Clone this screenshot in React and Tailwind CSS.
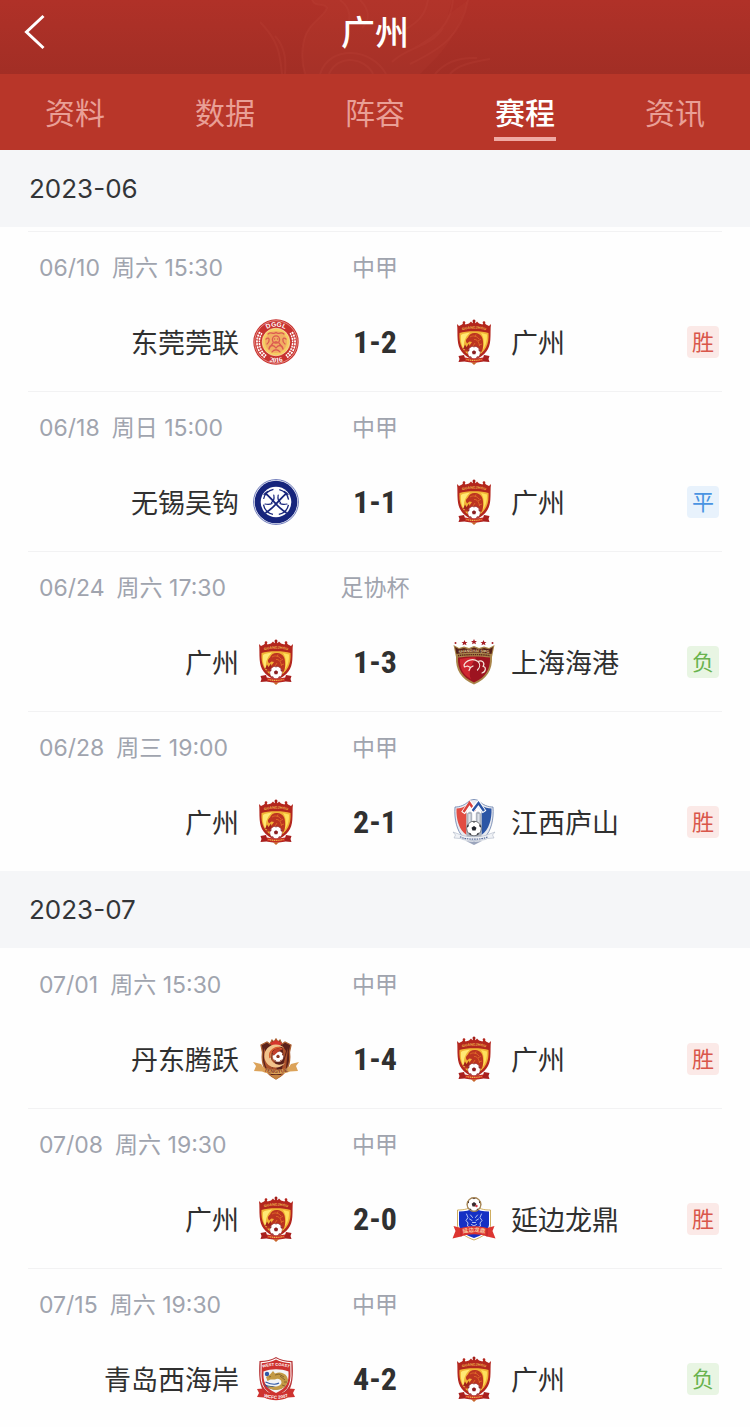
import React from 'react';

const SERIF = 'Liberation Serif, serif';
const SANS = 'Liberation Sans, sans-serif';

function Football({ cx, cy, r, dark = '#3a2a30' }) {
  return (
    <g transform={`translate(${cx} ${cy}) scale(${r / 8})`}>
      <circle r="8" fill="#fff" stroke={dark} strokeWidth="0.6" />
      <path d="M0-2.800 2.700-.8 1.700 2.300H-1.700L-2.700-.8Z" fill={dark} />
      <path d="M-2-7.600 0-6.200 2-7.600ZM5.800-4.600 5.900-2.200 7.800-1 7.300-3.400ZM-5.800-4.600-5.900-2.200-7.800-1-7.300-3.400ZM3.400 5.400 5.800 4.300 4.400 6.600 2.700 7.400ZM-3.400 5.400-5.800 4.300-4.400 6.600-2.700 7.400Z" fill={dark} />
    </g>
  );
}

function GuangzhouCrest() {
  return (
    <svg viewBox="0 0 46 46" className="size-full" aria-hidden="true">
      <path d="M6 5 8 7 11 5.500 13 3 14.500 5.500 18 4.500 20 2.500 21.500 4.200 23 .5 24.500 4.200 26 2.500 28 4.500 31.500 5.500 33 3 35 5.500 38 7 40 5C39.300 10 39.800 15 39.300 21 38.600 30 35 36 23 41.500 11 36 7.400 30 6.700 21 6.200 15 6.700 10 6 5Z" fill="#b3261e" />
      <circle cx="23" cy="2" r="1.500" fill="#a31f1a" />
      <circle cx="13" cy="3.500" r="1.300" fill="#b3261e" />
      <circle cx="33" cy="3.500" r="1.300" fill="#b3261e" />
      <path d="M8.500 14C15 11.500 31 11.500 37.500 14 38.200 25 35 33.500 23 39 11 33.500 7.800 25 8.500 14Z" fill="#f2b436" />
      <path d="M10 16C12 14.500 15 14 19 13.500 13 19 11.500 26 14 32 10.500 27.500 9.500 22 10 16Z" fill="#ffe974" />
      <path d="M30 14 36 15.500C36.200 22 34.800 27 31.500 31 33.500 25 33.500 19 30 14Z" fill="#ffe05c" />
      <path id="gz-title" d="M10 11.800C17 9 29 9 36 11.800" fill="none" />
      <text fontSize="3.600" fontWeight="700" fontFamily={SANS} fill="#f0bd4e" textAnchor="middle">
        <textPath href="#gz-title" startOffset="50%">GUANGZHOU</textPath>
      </text>
      <path d="M15 22.500C14.500 20.500 16 19.500 17 18.500 18 15.500 21 13.500 24.500 14 29.500 14.600 31.800 18 32 22.500 32.200 26 32.600 29 30.500 33L25 31 19 32 12.500 33C13.500 30 15.500 28.500 18.500 26.500L21 23 18.500 22.500 16 24.500Z" fill="#bc3420" />
      <path d="M19 18C22 16 26 17 28 20M23 20.500C26 20 28 23 28.500 27M25 15.500 24 18M30 20 27 22M31 25 28 26M24 24 21.500 28" fill="none" stroke="#e2702a" strokeWidth="0.800" />
      <path d="M12 30 14 25.500 15.500 28 18 24.500 19 31" fill="#a3241a" />
      <Football cx={23} cy={33.500} r={6.300} dark="#8a1f22" />
      <path d="M7.500 37 13 36 14 39C20 40.500 26 40.500 32 39L33 36 38.500 37 37.500 40 38.500 43 32.500 42.500C26 44 20 44 13.500 42.500L7.500 43 8.500 40Z" fill="#a81f1d" />
      <path d="M14 38.500C20 40 26 40 32 38.500V42C26 43.500 20 43.500 14 42Z" fill="#c62c22" />
      <path d="M15.500 40.500C20 41.700 26 41.700 30.500 40.500" stroke="#f0bd4e" strokeWidth="1.100" strokeDasharray="1.200 .6" fill="none" />
      <path d="M20 43.300 23 46 26 43.300Z" fill="#c8662c" />
    </svg>
  );
}

function DongguanCrest() {
  return (
    <svg viewBox="0 0 46 46" className="size-full" aria-hidden="true">
      <circle cx="23" cy="23" r="22.700" fill="#c8322f" />
      <circle cx="23" cy="23" r="21.300" fill="none" stroke="#f0a9a0" strokeWidth="0.700" />
      <circle cx="23" cy="23" r="13.800" fill="#f6cd62" stroke="#fbe3b0" strokeWidth="0.700" />
      <path d="M7.800 13.500A18 18 0 0 0 12.500 37.600M38.200 13.500A18 18 0 0 1 33.500 37.600" stroke="#fff" strokeWidth="4" strokeDasharray="2 .8" fill="none" />
      <path d="M7.800 13.500A18 18 0 0 0 12.500 37.600M38.200 13.500A18 18 0 0 1 33.500 37.600" stroke="#c8322f" strokeWidth="0.800" fill="none" />
      <path id="dg-top" d="M7.500 23A15.500 15.500 0 0 1 38.500 23" fill="none" />
      <path id="dg-bottom" d="M2.500 23A20.500 20.500 0 0 0 43.500 23" fill="none" />
      <text fontSize="6.500" fontWeight="700" fontFamily={SANS} fill="#fff" textAnchor="middle">
        <textPath href="#dg-top" startOffset="50%">DGGL</textPath>
      </text>
      <text fontSize="7" fontWeight="700" fontFamily={SERIF} fill="#fff" textAnchor="middle">
        <textPath href="#dg-bottom" startOffset="50%">2016</textPath>
      </text>
      <circle cx="23" cy="23" r="11" fill="#ee9a62" opacity="0.600" />
      <g fill="none" stroke="#dc5a50" strokeWidth="1.300" strokeLinecap="round">
        <circle cx="23" cy="20.500" r="3.600" />
        <path d="M15 15C18 12 20 16 23 13.500 26 16 28 12 31 15M13 20C17 17 17 23 14 25M33 20C29 17 29 23 32 25M16 30C17 25 21 26 23 29 25 26 29 25 30 30M19 33C21 30 25 30 27 33M20 24 17 28M26 24 29 28" />
        <path d="M21.500 20h.2M24.500 20h.2M22 23h2" />
      </g>
    </svg>
  );
}

function WuxiCrest() {
  return (
    <svg viewBox="0 0 46 46" className="size-full" aria-hidden="true">
      <circle cx="23" cy="23" r="22.400" fill="#fff" stroke="#5664ae" strokeWidth="0.900" />
      <circle cx="23" cy="23" r="21.300" fill="#17257c" />
      <circle cx="23" cy="23" r="15.300" fill="#fff" />
      <circle cx="23" cy="23" r="12.800" fill="none" stroke="#17257c" strokeWidth="1.300" strokeDasharray="14.100 6" strokeDashoffset="-3" />
      <g fill="none" stroke="#17257c" strokeLinecap="round">
        <path d="M12.500 14.500C16 17 20 22 23 25 26 28.500 30 31.500 33 33.500" strokeWidth="1.800" />
        <path d="M33.500 14.500C30 17 26 22 23 25 20 28.500 16 31.500 13 33.500" strokeWidth="1.800" />
        <path d="M20.800 16C21.500 19.500 20.800 22 18.500 23.500M25.200 16C24.500 19.500 25.200 22 27.500 23.500M12 25C15 25.500 17 25.500 19 24.500M34 25C31 25.500 29 25.500 27 24.500" strokeWidth="1.200" />
        <path d="M11 15.500 14.500 12.500M35 15.500 31.500 12.500" strokeWidth="1.200" />
      </g>
    </svg>
  );
}

function ShanghaiCrest() {
  return (
    <svg viewBox="0 0 46 46" className="size-full" aria-hidden="true">
      <path d="M2.500 6 8 9 13 7.500 18 9 23 7 28 9 33 7.500 38 9 43.500 6 41 18C41.500 31 36 40 23 45.500 10 40 4.500 31 5 18Z" fill="#a9854a" />
      <path d="M4 8 8 10.200 13 9 18 10.500 23 8.500 28 10.500 33 9 38 10.200 42 8 40.500 15C30 13 16 13 5.500 15Z" fill="#542018" />
      <path id="sh-title" d="M5.500 14.800C16 12.300 30 12.300 40.500 14.800" fill="none" />
      <text fontSize="3.800" fontWeight="700" fontFamily={SANS} fill="#ead49d" textAnchor="middle">
        <textPath href="#sh-title" startOffset="50%">SHANGHAI SIPG</textPath>
      </text>
      <path d="M7 16.700C16 15.200 30 15.200 39 16.700" stroke="#5c261b" strokeWidth="1.400" strokeDasharray="1.400 .7" fill="none" />
      <path d="M7 18.500C16 17 30 17 39 18.500 39.500 30 35 38 23 43.500 11 38 6.500 30 7 18.500Z" fill="#9d1420" />
      <path d="M9 20C15 18.500 20 18.500 25 18.500 20 25 17 35 20 40 12 36 8.500 29 9 20Z" fill="#cf2630" />
      <path d="M13 26C15 21 22 19 27 22.500 29.500 25 29 28.500 26.500 31M13 26 13.500 28 16.500 27 19.500 28.500 18 31.500M19.500 28.500 22 27M27 22.500C31 20.500 34.500 24 32 27.500 35.500 27.500 35 33 31 34" fill="none" stroke="#f6e6dc" strokeWidth="1.200" strokeLinecap="round" strokeLinejoin="round" />
      <g fill="#a51d25">
        <path id="sh-star" d="M23 0 23.900 1.900 26 2 24.400 3.300 25 5.300 23 4.200 21 5.300 21.600 3.300 20 2 22.100 1.900Z" />
        <use href="#sh-star" x="-9.500" y="1" />
        <use href="#sh-star" x="9.500" y="1" />
        <circle cx="4.500" cy="4" r="1" />
        <circle cx="41.500" cy="4" r="1" />
      </g>
    </svg>
  );
}

function JiangxiCrest() {
  return (
    <svg viewBox="0 0 46 46" className="size-full" aria-hidden="true">
      <path d="M4 8C9 8 14 6 18 2 21 0 25 0 28 2 32 6 37 8 42 8 43 20 40 32 34 38L23 42 12 38C6 32 3 20 4 8Z" fill="#e8eaf0" stroke="#667dab" strokeWidth="0.800" />
      <path d="M5.500 9.500C9 9.500 12.500 8.500 15.500 6.500V36C8 31 5 20 5.500 9.500Z" fill="#e24c42" />
      <path d="M30.500 6.500C33.500 8.500 37 9.500 40.500 9.500 41 20 38 31 30.500 36Z" fill="#2b55a5" />
      <path d="M15.500 13H30.500V38H15.500Z" fill="#aeb4bf" />
      <path d="M18.500 15V35M27.500 15V35" stroke="#dfe3ea" strokeWidth="2" />
      <path d="M23 12V35" stroke="#fff" strokeWidth="3.600" />
      <path d="M12 14 19 4.500 25 13" fill="none" stroke="#fff" strokeWidth="4.500" />
      <path d="M12.500 13 18.500 4 24 12" fill="none" stroke="#d9423d" strokeWidth="2.400" />
      <path d="M21 12 27.500 4 33.500 13" fill="none" stroke="#fff" strokeWidth="4.500" />
      <path d="M21.500 12 27.500 4 33 12" fill="none" stroke="#2b55a5" strokeWidth="2.400" />
      <path d="M16 14 19 10 22 14M24 14 27 10 30 14" fill="none" stroke="#fff" strokeWidth="1.500" />
      <Football cx={23} cy={29.500} r={7.300} dark="#20242c" />
      <path d="M2 33 9 35.500C15 38.500 31 38.500 37 35.500L44 33 41.500 36 43 39 36.500 39.500C32 42.500 14 42.500 9.500 39.500L3 39 4.500 36Z" fill="#f0f2f6" stroke="#a1aabd" strokeWidth="0.500" />
      <path d="M9 37.800C15 41 31 41 37 37.800" stroke="#5a6d9a" strokeWidth="1.200" strokeDasharray="1.600 .8" fill="none" />
      <path d="M15 42C20 43 26 43 31 42L23 46Z" fill="#9ba5bc" />
    </svg>
  );
}

function DandongCrest() {
  return (
    <svg viewBox="0 0 46 46" className="size-full" aria-hidden="true">
      <path d="M8 9 14 6 17 8 19 4 21 6 23 3 25 6 27 4 29 8 32 6 38 9 36.500 16C38 29 34 37 23 43 12 37 8 29 9.500 16Z" fill="#5b211a" stroke="#ad6234" strokeWidth="1.300" />
      <path d="M11 12 20 34 14 33C11 27 10.500 19 11 12ZM17 10 25 37 20 36ZM35 12 33 32 28 36ZM29 9 33 15 31 22Z" fill="#ab512b" />
      <path d="M17 7 23 4 29 7 27 10H19Z" fill="#d5362d" />
      <path d="M31 12A11.500 11.500 0 1 0 32 27 9 9 0 1 1 31 12Z" fill="#f2c38b" />
      <path d="M29 13C23 9 15 15 17 22" fill="none" stroke="#d85d2f" strokeWidth="1.600" />
      <Football cx={25} cy={20.500} r={5.500} dark="#8c3a24" />
      <path d="M19 16 23 12.500 30 13 26 15 21 19.500Z" fill="#c3402a" />
      <path d="M0 26 8 28 10 31C18 34.500 28 34.500 36 31L38 28 46 26 43 30 45 35 37 35.500C29 39 17 39 9 35.500L1 35 3 30Z" fill="#dca35a" />
      <path id="dd-title" d="M8 34.500C18 38 28 38 38 34.500" fill="none" />
      <text fontSize="5" fontWeight="700" fontFamily={SANS} fill="#863525" textAnchor="middle">
        <textPath href="#dd-title" startOffset="50%">TENGYUE</textPath>
      </text>
      <path d="M17 39H29L23 43.500Z" fill="#c58442" />
    </svg>
  );
}

function YanbianCrest() {
  return (
    <svg viewBox="0 0 46 46" className="size-full" aria-hidden="true">
      <path d="M6.500 14C13 14 18 13 23 9 28 13 33 14 39.500 14V30C38 37 31 41 23 44 15 41 8 37 6.500 30Z" fill="#fff" stroke="#c9a54f" strokeWidth="0.900" />
      <path d="M8 15.500C14 15.500 19 14.500 23 11.500 27 14.500 32 15.500 38 15.500V29C37 36 30 39.500 23 42 16 39.500 9 36 8 29Z" fill="#1530c4" />
      <g fill="none" stroke="#c9d5f7" strokeWidth="0.900" strokeLinecap="round">
        <path d="M15.500 18 17 21.500 15 24.500 17 27 16.500 30 20 32M30.500 18 29 21.500 31 24.500 29 27 29.500 30 26 32M19.500 19 21.500 21.500M26.500 19 24.500 21.500M18.500 23 21 24.500M27.500 23 25 24.500M20.500 28.500 23 30 25.500 28.500M21.500 26.500H24.500" />
      </g>
      <Football cx={23} cy={8.500} r={6.800} />
      <circle cx="23" cy="8.500" r="6.900" fill="none" stroke="#a98651" strokeWidth="1.200" />
      <circle cx="25.500" cy="10" r="1.200" fill="#d63d49" />
      <path d="M2.500 30 10 32C18 29.500 28 29.500 36 32L43.500 30 41.500 35 44.500 42.500 36 40.500C28 37.500 18 37.500 10 40.500L1.500 42.500 4.500 35Z" fill="#dc3531" />
      <path d="M10 32V40.500M36 32V40.500" stroke="#a92526" strokeWidth="0.800" />
      <path id="yb-title" d="M10 37.800C18 35.300 28 35.300 36 37.800" fill="none" />
      <text fontSize="5.500" fontWeight="700" fontFamily="Noto Sans CJK SC, sans-serif" fill="#f8c7a0" textAnchor="middle">
        <textPath href="#yb-title" startOffset="50%">延边龙鼎</textPath>
      </text>
    </svg>
  );
}

function QingdaoCrest() {
  return (
    <svg viewBox="0 0 46 46" className="size-full" aria-hidden="true">
      <path d="M6.500 5C13 5 19 3.500 23 1 27 3.500 33 5 39.500 5 40.500 18 40 31 34 37 30 40 26 42 23 43.500 20 42 16 40 12 37 6 31 5.500 18 6.500 5Z" fill="#b9383a" />
      <path d="M7.700 6.200C13.500 6 19 4.500 23 2.300 27 4.500 32.500 6 38.300 6.200L38.500 20C38 31 33 36 23 41 13 36 8 31 7.500 20Z" fill="#fff" />
      <path d="M8.700 7.200C14 7 19 5.500 23 3.500 27 5.500 32 7 37.300 7.200L37.500 20C37 31 33 36 23 40 13 36 9 31 8.500 20Z" fill="#ce322f" />
      <path d="M10.500 15.500C18 12.500 28 12.500 35.500 15.500 36 26 34 32 23 37 12 32 10 26 10.500 15.500Z" fill="#f3f4f5" />
      <path id="qd-top" d="M10 11.800C18 9 28 9 36 11.800" fill="none" />
      <text fontSize="4" fontWeight="700" fontFamily={SANS} fill="#fff" textAnchor="middle">
        <textPath href="#qd-top" startOffset="50%">WEST COAST</textPath>
      </text>
      <path d="M11 27C13 34 30 38 35.500 25 34 30 28 33 23 31 18 29 14 31 11 27Z" fill="#254c93" />
      <path d="M13 21 17 18.500 20 15 22 17.500C29 14.500 35 19 35 24.500 34 31 28 34 23 34 19 34 16 32.500 14 30 20 31.500 28 31 28.500 26.500 28.500 23 24.500 22 22 23.500L17.500 23.500 14.500 25Z" fill="#c39a45" />
      <path d="M22 19 26 18 31 21M27 20 32 24M31 26 34 26M29 29 32 30M16 21 18 20.500" fill="none" stroke="#7a5b28" strokeWidth="0.800" />
      <path d="M12.500 26C17 28 22 29.500 26 27" fill="none" stroke="#2d57a6" strokeWidth="1.200" />
      <circle cx="14" cy="18" r="2.200" fill="#2d57a6" />
      <path d="M4 33 10 32.500 12 35C19 38.500 27 38.500 34 35L36 32.500 42 33 40 37 42 41 35 41.500C27 45 19 45 11 41.500L4 41 6 37Z" fill="#ce322f" />
      <path id="qd-bottom" d="M10 40.300C18 43.500 28 43.500 36 40.300" fill="none" />
      <text fontSize="4.500" fontWeight="700" fontFamily={SANS} fill="#fff" textAnchor="middle">
        <textPath href="#qd-bottom" startOffset="50%">WCFC 2007</textPath>
      </text>
    </svg>
  );
}

const CRESTS = {
  广州: GuangzhouCrest,
  东莞莞联: DongguanCrest,
  无锡吴钩: WuxiCrest,
  上海海港: ShanghaiCrest,
  江西庐山: JiangxiCrest,
  丹东腾跃: DandongCrest,
  延边龙鼎: YanbianCrest,
  青岛西海岸: QingdaoCrest,
};

const RESULT_STYLES = {
  胜: 'bg-[#fbe9e7] text-[#d9574b]',
  平: 'bg-[#e8f2fc] text-[#4a94e2]',
  负: 'bg-[#e8f5e3] text-[#68b34e]',
};

const TABS = ['资料', '数据', '阵容', '赛程', '资讯'];

const MONTHS = [
  {
    month: '2023-06',
    matches: [
      { date: '06/10', time: '周六 15:30', league: '中甲', home: '东莞莞联', score: '1-2', away: '广州', result: '胜' },
      { date: '06/18', time: '周日 15:00', league: '中甲', home: '无锡吴钩', score: '1-1', away: '广州', result: '平' },
      { date: '06/24', time: '周六 17:30', league: '足协杯', home: '广州', score: '1-3', away: '上海海港', result: '负' },
      { date: '06/28', time: '周三 19:00', league: '中甲', home: '广州', score: '2-1', away: '江西庐山', result: '胜' },
    ],
  },
  {
    month: '2023-07',
    matches: [
      { date: '07/01', time: '周六 15:30', league: '中甲', home: '丹东腾跃', score: '1-4', away: '广州', result: '胜' },
      { date: '07/08', time: '周六 19:30', league: '中甲', home: '广州', score: '2-0', away: '延边龙鼎', result: '胜' },
      { date: '07/15', time: '周六 19:30', league: '中甲', home: '青岛西海岸', score: '4-2', away: '广州', result: '负' },
    ],
  },
];

function Crest({ team }) {
  const Drawing = CRESTS[team];
  return (
    <span className="size-[46px] shrink-0">
      <Drawing />
    </span>
  );
}

function Header() {
  return (
    <header className="relative flex h-[74px] items-center justify-center overflow-hidden bg-linear-to-b from-[#b03128] to-[#a22e25] pb-2">
      <svg viewBox="0 0 230 74" className="absolute top-0 left-1/2 h-full w-[230px] -translate-x-1/2" fill="none" aria-hidden="true">
        <path d="M52 0C55 8 64 2 67 8 63 18 48 23 44 40 41 53 42 64 45 74H160C176 58 196 42 208 0L188 15 192 0Z" fill="#c34338" opacity="0.160" />
        <g stroke="#c34a3e" strokeWidth="2" opacity="0.200">
          <path d="M0 22C20 42 20 57 22 74M15 36C26 48 26 62 25 74M52 0C55 8 64 2 67 8 63 18 48 23 44 40 41 53 42 64 45 74" />
          <path d="M208 0C201 36 181 49 150 64M193 0C191 25 176 36 155 48M168 0C165 17 156 23 146 29M217 58C199 57 185 62 175 74M230 59C207 63 197 66 190 74M80 0C91 8 92 20 85 28M100 0C110 10 110 20 102 28" />
          <path d="M60 74C70 44 112 48 126 74M69 74C78 53 106 58 113 74M132 62C148 46 170 48 183 28" />
        </g>
      </svg>
      <button type="button" aria-label="返回" className="absolute top-3.5 left-5 flex h-9 w-8 items-center justify-center text-white">
        <svg viewBox="0 0 32 36" className="h-9 w-8" fill="none" stroke="currentColor" strokeWidth="3" aria-hidden="true">
          <path d="M23.500 2 6.500 18 23.500 34" />
        </svg>
      </button>
      <h1 className="relative text-[34px] leading-9 font-medium text-white">广州</h1>
    </header>
  );
}

function Tabs() {
  return (
    <nav aria-label="球队" className="grid h-[76px] grid-cols-5 bg-[#b83629] text-[30px]">
      {TABS.map((tab) => {
        const active = tab === '赛程';
        return (
          <a
            key={tab}
            href="#"
            aria-current={active ? 'page' : undefined}
            className={active ? 'flex flex-col items-center pt-[19px] font-medium text-white' : 'flex flex-col items-center pt-[19px] text-[#e99f96]'}
          >
            <span className="leading-10">{tab}</span>
            {active && <span className="mt-1 h-1 w-[62px] bg-[#efaaa3]" />}
          </a>
        );
      })}
    </nav>
  );
}

function Match({ match }) {
  return (
    <li className="border-t border-[#f2f2f3] pt-5 pb-[26px] first:group-last:border-transparent">
      <div className="grid grid-cols-[1fr_152px_1fr] items-center text-[23px] leading-8 text-[#a0a4ae]">
        <div className="flex gap-3 pl-[11px]">
          <span>{match.date}</span>
          <span>{match.time}</span>
        </div>
        <span className="text-center">{match.league}</span>
      </div>
      <div className="mt-[35px] grid grid-cols-[1fr_152px_1fr] items-center text-[27px] leading-[42px] text-[#303030]">
        <div className="flex items-center justify-end gap-3.5">
          <span className="pt-1">{match.home}</span>
          <Crest team={match.home} />
        </div>
        <span className="text-center font-['Liberation_Sans_Narrow','Roboto_Condensed',Roboto,sans-serif] text-[32px] font-bold">
          {match.score}
        </span>
        <div className="flex items-center gap-3.5">
          <Crest team={match.away} />
          <span className="pt-1">{match.away}</span>
          <span className={`mr-[3px] ml-auto size-8 rounded-sm text-center text-[22px] leading-8 ${RESULT_STYLES[match.result]}`}>
            {match.result}
          </span>
        </div>
      </div>
    </li>
  );
}

export default function App() {
  return (
    <div lang="zh-CN" className="overflow-hidden bg-[#fefefe] font-[Inter,'Noto_Sans_CJK_SC',sans-serif]">
      <Header />
      <Tabs />
      <main>
        {MONTHS.map(({ month, matches }) => (
          <section key={month} className="group">
            <h2 className="bg-[#f5f6f8] px-[29px] text-[26px] leading-[77px] text-[#333538]">{month}</h2>
            <ul className="px-7 group-first:pt-1">
              {matches.map((match) => (
                <Match key={match.date} match={match} />
              ))}
            </ul>
          </section>
        ))}
      </main>
    </div>
  );
}
